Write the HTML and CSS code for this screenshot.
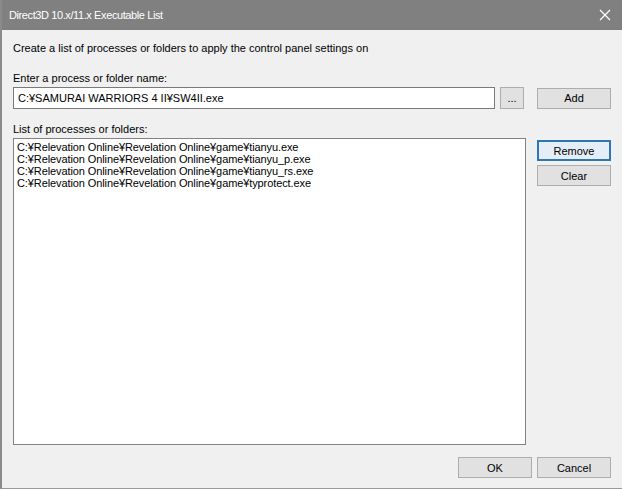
FILE: index.html
```html
<!DOCTYPE html>
<html>
<head>
  <meta charset="UTF-8">
  <title>Direct3D 10.x/11.x Executable List</title>
  <link rel="stylesheet" href="styles.css">
</head>
<body>
  <div class="window">
    <div class="titlebar">
      <span class="title">Direct3D 10.x/11.x Executable List</span>
      <svg class="close" width="12" height="12" viewBox="0 0 12 12">
        <path d="M1 1 L11 11 M11 1 L1 11" stroke="#fff" stroke-width="1.2" fill="none"/>
      </svg>
    </div>

    <div class="content">
      <p class="intro">Create a list of processes or folders to apply the control panel settings on</p>

      <p class="label">Enter a process or folder name:</p>
      <div class="entry-row">
        <div class="textbox">C:¥SAMURAI WARRIORS 4 II¥SW4II.exe</div>
        <button class="btn browse">...</button>
        <button class="btn side">Add</button>
      </div>

      <p class="label list-label">List of processes or folders:</p>
      <div class="list-row">
        <div class="listbox">
          <div class="item">C:¥Relevation Online¥Revelation Online¥game¥tianyu.exe</div>
          <div class="item">C:¥Relevation Online¥Revelation Online¥game¥tianyu_p.exe</div>
          <div class="item">C:¥Relevation Online¥Revelation Online¥game¥tianyu_rs.exe</div>
          <div class="item">C:¥Relevation Online¥Revelation Online¥game¥typrotect.exe</div>
        </div>
        <div class="side-buttons">
          <button class="btn side default">Remove</button>
          <button class="btn side">Clear</button>
        </div>
      </div>

      <div class="footer">
        <button class="btn side">OK</button>
        <button class="btn side">Cancel</button>
      </div>
    </div>
  </div>
</body>
</html>
```

FILE: styles.css
```css
/* Dialog de lista de executáveis */
body {
  margin: 0;
  font-family: "Liberation Sans", Arial, sans-serif;
  font-size: 11px;
  color: #000;
  background-color: #f0f0f0;
}
.window {
  width: 622px;
  height: 489px;
  box-sizing: border-box;
  border-left: 2px solid #8a8a8a;
  border-bottom: 1px solid #9a9a9a;
  background-color: #f0f0f0;
  overflow: hidden;
}
.titlebar {
  height: 30px;
  background-color: #808080;
  display: flex;
  align-items: center;
  justify-content: space-between;
  padding: 0 10px 0 7px;
}
.title {
  color: #fff;
  font-size: 11px;
  letter-spacing: -0.4px;
}
.close {
  margin-right: 1px;
}
.content {
  padding: 0 11px 0 11px;
}
.intro {
  margin: 11px 0 0;
  line-height: 14px;
}
.label {
  margin: 16px 0 0;
  line-height: 14px;
}
.entry-row {
  display: flex;
  align-items: center;
  margin-top: 2px;
}
.textbox {
  width: 482px;
  height: 22px;
  box-sizing: border-box;
  border: 1px solid #7a7a7a;
  background-color: #fff;
  padding: 0 4px;
  line-height: 20px;
}
.btn {
  font-family: "Liberation Sans", Arial, sans-serif;
  font-size: 11px;
  background-color: #e1e1e1;
  border: 1px solid #adadad;
  box-sizing: border-box;
  padding: 0;
  color: #000;
}
.browse {
  width: 24px;
  height: 22px;
  margin-left: 5px;
}
.side {
  width: 74px;
  height: 21px;
}
.entry-row .side {
  margin-left: 13px;
}
.list-label {
  margin-top: 13px;
}
.list-row {
  display: flex;
  margin-top: 2px;
}
.listbox {
  width: 513px;
  height: 307px;
  box-sizing: border-box;
  border: 1px solid #828282;
  background-color: #fff;
  padding: 2px 3px;
  font-size: 11px;
  letter-spacing: -0.1px;
}
.item {
  line-height: 12px;
}
.side-buttons {
  display: flex;
  flex-direction: column;
  gap: 4px;
  margin-left: 11px;
  margin-top: 2px;
}
.default {
  border: 2px solid #2d78b4;
  background-color: #e5eef6;
}
.footer {
  display: flex;
  justify-content: flex-end;
  gap: 5px;
  margin-top: 12px;
}
```
